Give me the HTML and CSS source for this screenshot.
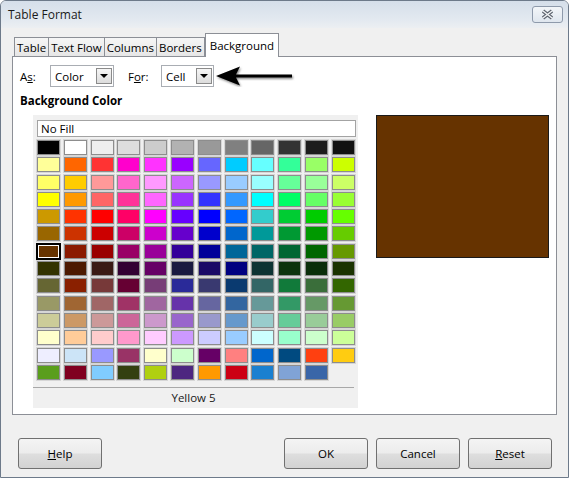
FILE: index.html
```html
<!DOCTYPE html>
<html>
<head>
    <title>Table Format</title>
    <link rel="stylesheet" href="styles.css">
</head>
<body>
    <div class="window">
        <div class="titlebar">
            <span class="title">Table Format</span>
            <div class="close-btn">
                <svg width="15" height="11" viewBox="0 0 15 11">
                    <path d="M3 2 L12 9 M12 2 L3 9" stroke="#5f6670" stroke-width="3.6" fill="none"/>
                    <path d="M3 2 L12 9 M12 2 L3 9" stroke="#f2f4f6" stroke-width="1.4" fill="none"/>
                </svg>
            </div>
        </div>
        <div class="client">
            <div class="tabs">
                <div class="tab">Table</div>
                <div class="tab">Text Flow</div>
                <div class="tab">Columns</div>
                <div class="tab">Borders</div>
                <div class="tab active">Background</div>
            </div>
            <div class="panel">
                <div class="options-row">
                    <label class="as-label">A<u>s</u>:</label>
                    <div class="combo combo-as">
                        <span class="combo-text">Color</span>
                        <span class="drop"><span class="tri"></span></span>
                    </div>
                    <label class="for-label">F<u>o</u>r:</label>
                    <div class="combo combo-for">
                        <span class="combo-text">Cell</span>
                        <span class="drop"><span class="tri"></span></span>
                    </div>
                    <svg class="arrow" width="80" height="22" viewBox="0 0 80 22">
                        <defs>
                            <filter id="blur" x="-10%" y="-30%" width="120%" height="160%">
                                <feGaussianBlur stdDeviation="0.9"/>
                            </filter>
                        </defs>
                        <path d="M2 12.5 L26 3 L22 11 L78 11 L78 14 L22 14 L26 22 Z" fill="#8a8a8a" filter="url(#blur)"/>
                        <path d="M1 11 L25 1.5 L21 9.5 L77 9.5 L77 12.5 L21 12.5 L25 20.5 Z" fill="#000"/>
                    </svg>
                </div>
                <div class="section-title">Background Color</div>
                <div class="color-area">
                    <div class="palette">
                        <div class="color-name">No Fill</div>
                        <div class="swatches" id="swatches"></div>
                        <div class="status">Yellow 5</div>
                    </div>
                    <div class="preview"></div>
                </div>
            </div>
            <div class="buttons">
                <button class="btn"><u>H</u>elp</button>
                <div class="spacer"></div>
                <button class="btn">OK</button>
                <button class="btn">Cancel</button>
                <button class="btn"><u>R</u>eset</button>
            </div>
        </div>
    </div>
    <script>
        // palette rows, 12 per row (last row has 11)
        const colores = [
            ['#000000','#ffffff','#eeeeee','#dddddd','#cccccc','#b2b2b2','#999999','#808080','#666666','#333333','#1c1c1c','#111111'],
            ['#ffff99','#ff6600','#ff3333','#ff00cc','#ff33ff','#9900ff','#6666ff','#00ccff','#66ffff','#33ff99','#99ff66','#ccff00'],
            ['#ffff66','#ffcc00','#ff9999','#ff66cc','#ff99ff','#cc66ff','#9999ff','#99ccff','#99ffff','#66ff99','#99ff99','#ccff66'],
            ['#ffff00','#ff9900','#ff6666','#ff3399','#ff66ff','#9933ff','#3333ff','#3399ff','#00ffff','#00ff66','#66ff66','#99ff33'],
            ['#cc9900','#ff3300','#ff0000','#ff0066','#ff00ff','#6600ff','#0000ff','#0066ff','#33cccc','#00cc33','#00cc00','#66ff00'],
            ['#996600','#cc3300','#cc0000','#cc0066','#cc00cc','#6600cc','#0000cc','#0066cc','#009999','#009933','#009900','#66cc00'],
            ['#663300','#8b1a00','#990000','#990066','#990099','#330099','#000099','#006699','#006666','#006633','#006600','#669900'],
            ['#333300','#4c1900','#3a1a14','#330033','#660066','#1a1a40','#1a0a66','#000080','#0d3333','#0d330d','#0a2e0a','#1a3300'],
            ['#666633','#8a2000','#773939','#660033','#773d77','#2a2a99','#393970','#0a3a70','#336666','#117a3a','#3a6e3a','#336600'],
            ['#999966','#a06633','#a06666','#a03366','#a066a0','#6633aa','#6666a0','#3366a0','#669999','#339966','#669966','#669933'],
            ['#cccc99','#cc9966','#cc9999','#cc6699','#cc99cc','#9966cc','#9999cc','#6699cc','#99cccc','#66cc99','#99cc99','#99cc66'],
            ['#ffffcc','#ffcc99','#ffcccc','#ff99cc','#ffccff','#cc99ff','#ccccff','#99ccff','#ccffff','#99ffcc','#ccffcc','#ccff99'],
            ['#eeeeff','#cce4f7','#9999ff','#993366','#ffffcc','#ccffcc','#660066','#ff8080','#0066cc','#004a80','#ff4010','#ffcc11'],
            ['#5a9e1c','#800020','#80ccff','#334010','#b0d010','#4d2680','#ff9900','#cc0014','#1a80d0','#80a3d6','#3a66a8']
        ];
        const seleccionado = 72;
        const grid = document.getElementById('swatches');
        colores.flat().forEach((c, i) => {
            const celda = document.createElement('div');
            celda.className = i === seleccionado ? 'swatch selected' : 'swatch';
            celda.style.background = c;
            grid.appendChild(celda);
        });
    </script>
</body>
</html>
```

FILE: styles.css
```css
/* dialog window */
body {
    margin: 0;
    font-family: "Open Sans", "Noto Sans", sans-serif;
    font-size: 11.5px;
    color: #000;
    background: #fff;
}
.window {
    width: 569px;
    height: 478px;
    box-sizing: border-box;
    border: 1px solid #6d7a8a;
    border-radius: 6px 6px 0 0;
    background: #f0f0f0;
    display: flex;
    flex-direction: column;
    overflow: hidden;
}
.titlebar {
    height: 27px;
    flex-shrink: 0;
    display: flex;
    align-items: flex-start;
    justify-content: space-between;
    background: linear-gradient(#d5dfea, #e3e9f0 70%, #eceff2);
}
.title {
    font-size: 12px;
    margin: 5px 0 0 7px;
    color: #1a1a1a;
}
.close-btn {
    width: 29px;
    height: 15px;
    margin: 5px 5px 0 0;
    border: 1px solid #8e9aab;
    border-radius: 3px;
    background: linear-gradient(#f3f6f9, #dfe6ee);
    display: flex;
    align-items: center;
    justify-content: center;
}
.client {
    flex: 1;
    padding: 5px 11px 0 11px;
    display: flex;
    flex-direction: column;
}

/* tabs */
.tabs {
    display: flex;
    align-items: flex-end;
    margin-left: 2px;
}
.tab {
    border: 1px solid #8c8f96;
    border-bottom: none;
    margin-right: -1px;
    padding: 1px 2px 0;
    line-height: 17px;
    background: linear-gradient(#f6f6f6, #e6e6e6);
}
.tab.active {
    background: #fff;
    padding: 3px 4px 3px;
    margin-bottom: -1px;
    margin-left: 1px;
    position: relative;
    z-index: 1;
}
.panel {
    height: 359px;
    box-sizing: border-box;
    border: 1px solid #8c8f96;
    background: #fff;
    padding: 8px 7px;
}

/* As / For row */
.options-row {
    display: flex;
    align-items: center;
    height: 22px;
}
.as-label {
    width: 30px;
}
.for-label {
    margin-left: 14px;
    width: 33px;
}
.combo {
    height: 22px;
    box-sizing: border-box;
    border: 1px solid #a9adb3;
    background: #fff;
    display: flex;
    align-items: center;
    padding-left: 4px;
}
.combo-as {
    width: 64px;
}
.combo-for {
    width: 53px;
}
.combo-text {
    flex: 1;
}
.drop {
    width: 16px;
    height: 16px;
    box-sizing: border-box;
    margin-right: 1px;
    border: 1px solid #8b8b8b;
    background: linear-gradient(#f6f6f6, #dcdcdc);
    display: flex;
    align-items: center;
    justify-content: center;
}
.tri {
    width: 0;
    height: 0;
    border-left: 4px solid transparent;
    border-right: 4px solid transparent;
    border-top: 4px solid #000;
}
.arrow {
    margin-left: 1px;
}
.section-title {
    font-weight: bold;
    line-height: 16px;
    margin-top: 6px;
}

/* palette + preview */
.color-area {
    display: flex;
    align-items: flex-start;
    margin: 6px 0 0 13px;
}
.palette {
    width: 325px;
    box-sizing: border-box;
    background: #f0f0f0;
    padding: 5px 0 0 4px;
}
.color-name {
    width: 319px;
    height: 17px;
    box-sizing: border-box;
    border: 1px solid #a3a3a3;
    background: #fff;
    padding-left: 3px;
    line-height: 15px;
}
.swatches {
    display: grid;
    grid-template-columns: repeat(12, 23px);
    grid-auto-rows: 15px;
    column-gap: 3.8px;
    row-gap: 2.3px;
    margin-top: 3px;
}
.swatch {
    box-sizing: border-box;
    border: 1px solid #8d8d8d;
    box-shadow: 0 0 0 1px #d6d6d6;
}
.swatch.selected {
    border-color: #000;
    box-shadow: 0 0 0 1px #000, inset 0 0 0 1px #fff;
}
.status {
    margin: 7px 4px 0 -4px;
    border-top: 1px solid #a8a8a8;
    line-height: 20px;
    text-align: center;
    color: #1a1a1a;
}
.preview {
    width: 173px;
    height: 143px;
    box-sizing: border-box;
    margin-left: 18px;
    background: #663300;
    border: 1px solid #1a1a1a;
}

/* bottom buttons */
.buttons {
    display: flex;
    gap: 8px;
    margin: 23px 5px 0 6px;
}
.spacer {
    flex: 1;
}
.btn {
    width: 84px;
    height: 31px;
    font-family: inherit;
    font-size: 11.5px;
    border: 1px solid #707070;
    border-radius: 3px;
    background: linear-gradient(#f4f4f4, #ececec 48%, #dedede 52%, #d2d2d2);
    color: #000;
    padding: 0;
}
```
